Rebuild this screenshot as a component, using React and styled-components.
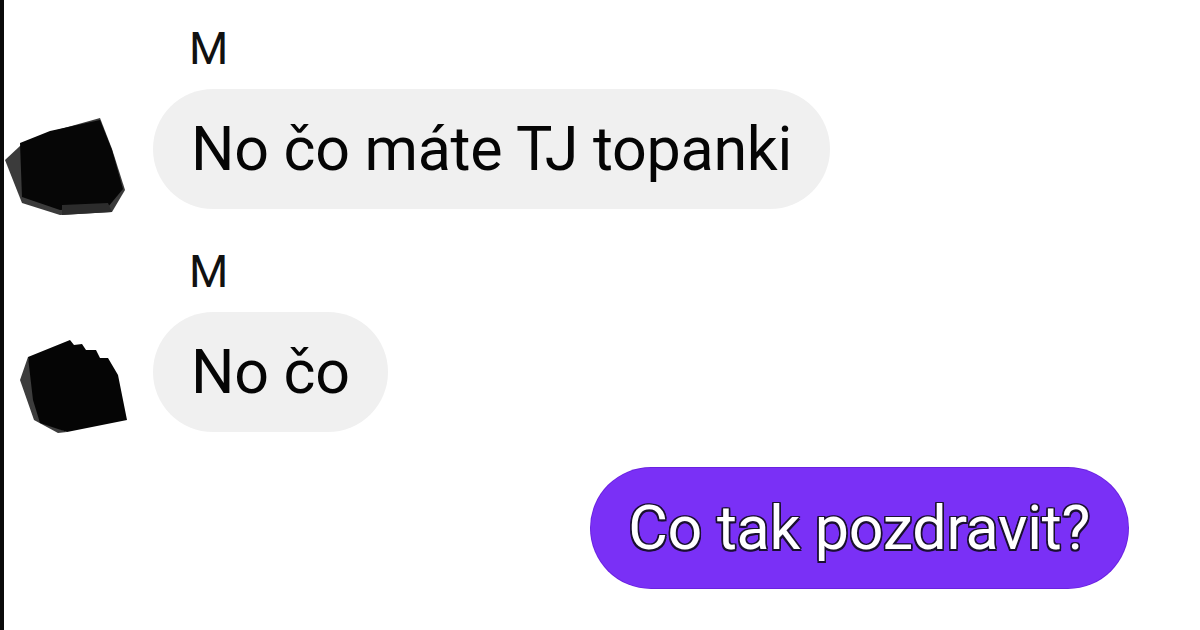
import React from 'react'
import styled, { createGlobalStyle } from 'styled-components'

const GlobalStyle = createGlobalStyle`
  html, body {
    margin: 0;
    padding: 0;
    background: #ffffff;
  }
  body {
    font-family: Roboto, "Liberation Sans", Arial, sans-serif;
  }
`

const Page = styled.div`
  width: 1200px;
  height: 630px;
  box-sizing: border-box;
  border-left: 4px solid #0a0a0a;
  padding-top: 27px;
  overflow: hidden;
  display: flex;
  flex-direction: column;
  background: #ffffff;
`

const Group = styled.div`
  display: grid;
  grid-template-columns: 149px auto;
  grid-template-rows: auto auto;
  row-gap: 18px;
  justify-items: start;
  margin-bottom: ${(p) => p.$after || 0}px;
`

const SenderName = styled.div`
  grid-column: 2;
  padding-left: 36px;
  font-size: 45px;
  line-height: 44px;
  color: #111;
`

const AvatarSlot = styled.svg`
  grid-column: 1;
  grid-row: 2;
  width: 149px;
  height: 120px;
  overflow: visible;
`

const Bubble = styled.div`
  grid-column: 2;
  grid-row: 2;
  height: 120px;
  box-sizing: border-box;
  padding: 0 38px;
  border-radius: 60px;
  background: #f0f0f0;
  color: #050505;
  font-size: 61px;
  letter-spacing: -0.3px;
  line-height: 120px;
  white-space: nowrap;
`

const OutRow = styled.div`
  display: flex;
  justify-content: flex-end;
  padding-right: 72px;
`

const OutBubble = styled.div`
  height: 120px;
  box-sizing: border-box;
  padding: 0 38px 0 37px;
  border-radius: 60px;
  background: #7a30f6;
  box-shadow: 0 0 0 1px #6a22e0;
  color: #ffffff;
  font-size: 61px;
  letter-spacing: -0.3px;
  line-height: 120px;
  white-space: nowrap;
  text-shadow:
    -1.5px -1.5px 0 #1a1030, 1.5px -1.5px 0 #1a1030, -1.5px 1.5px 0 #1a1030, 1.5px 1.5px 0 #1a1030,
    0 -1.5px 0 #1a1030, 0 1.5px 0 #1a1030, -1.5px 0 0 #1a1030, 1.5px 0 0 #1a1030;
`

// blurred-out avatars, coordinates are local to the message row
const AvatarOne = () => (
  <AvatarSlot viewBox="0 0 149 120">
    <polygon
      fill="#3b3b3b"
      points="1,71 16,57 46,43 96,29 108,60 121,101 108,123 56,126 18,114"
    />
    <polygon
      fill="#060606"
      points="16,54 46,42 96,31 108,61 119,100 104,118 56,121 18,108"
    />
    <polygon fill="#2c2c2c" points="58,116 104,114 108,123 58,126" />
  </AvatarSlot>
)

const AvatarTwo = () => (
  <AvatarSlot viewBox="0 0 149 120">
    <polygon
      fill="#3d3d3d"
      points="16,68 24,45 40,110 63,120 54,121 30,108"
    />
    <polygon
      fill="#050505"
      points="24,45 66,28 70,33 78,32 82,38 92,38 96,46 104,46 114,63 123,108 63,120 36,111 29,88"
    />
  </AvatarSlot>
)

export default function App() {
  return (
    <>
      <GlobalStyle />
      <Page>
        <Group $after={41}>
          <SenderName>M</SenderName>
          <AvatarOne />
          <Bubble>No čo máte TJ topanki</Bubble>
        </Group>
        <Group $after={36}>
          <SenderName>M</SenderName>
          <AvatarTwo />
          <Bubble>No čo</Bubble>
        </Group>
        <OutRow>
          <OutBubble>Co tak pozdravit?</OutBubble>
        </OutRow>
      </Page>
    </>
  )
}
